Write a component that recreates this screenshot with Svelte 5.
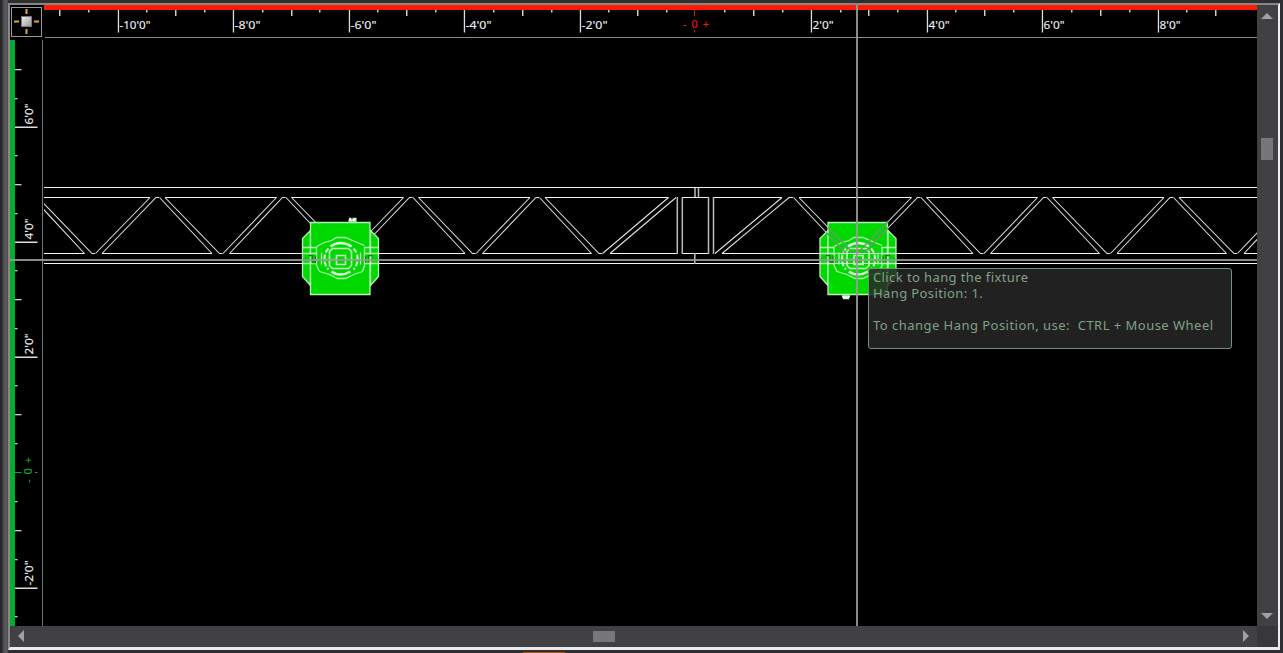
<script>
  const xTicks = Array.from({ length: 41 }, (_, i) => ({ i, x: Math.floor(60.8 + i * 28.9) }))
    .map(({ i, x }) => ({ x, kind: (i + 2) % 4 === 0 ? 'major' : i % 2 === 0 ? 'mid' : 'small' }))
    .filter((t) => t.kind !== 'major');
  const xMajor = [
    { x: 118, label: `-10'0"`, w: 31 },
    { x: 233, label: `-8'0"`, w: 26 },
    { x: 349, label: `-6'0"`, w: 26 },
    { x: 464, label: `-4'0"`, w: 26 },
    { x: 580, label: `-2'0"`, w: 26 },
    { x: 811, label: `2'0"`, w: 21 },
    { x: 927, label: `4'0"`, w: 21 },
    { x: 1042, label: `6'0"`, w: 21 },
    { x: 1158, label: `8'0"`, w: 21 }
  ];
  const yMid = [69, 184, 299, 414, 530];
  const ySmall = [98, 155, 213, 270, 328, 385, 443, 501, 559, 616];
  const yMajor = [
    { y: 127, label: `6'0"`, w: 21 },
    { y: 242, label: `4'0"`, w: 21 },
    { y: 357, label: `2'0"`, w: 21 },
    { y: 588, label: `-2'0"`, w: 25 }
  ];

  // Lattice of one truss section: alternating top and bottom nodes.
  const T = 197.5;
  const B = 253.5;
  const down = (t, b) => `M${t + 2} ${T}L${b - 9} ${B}M${t + 7.5} ${T}L${b - 1.5} ${B}H${b + 1.5}`;
  const up = (b, t) => `M${b + 2} ${B}L${t - 7.5} ${T}M${b + 8.5} ${B}L${t - 1.5} ${T}H${t + 1.5}`;
  const topsL = [30.5, 157.5, 284, 411, 537.5];
  const botsL = [93.5, 221, 347.5, 474, 600.5];
  const topsR = [791.5, 919, 1045, 1171.5];
  const botsR = [855, 982, 1108.5, 1235.5];
  let lattice = '';
  let chords = '';
  topsL.forEach((t, i) => {
    lattice += down(t, botsL[i]);
    if (i < 4) {
      lattice += up(botsL[i], topsL[i + 1]);
      chords += `M${t + 7.5} ${T}H${topsL[i + 1] - 7.5}M${botsL[i] + 8.5} ${B}H${botsL[i + 1] - 9}`;
    }
  });
  topsR.forEach((t, i) => {
    lattice += down(t, botsR[i]);
    const next = topsR[i + 1] ?? 1298;
    lattice += up(botsR[i], next);
    chords += `M${t + 7.5} ${T}H${next - 7.5}`;
    chords += `M${botsR[i] + 8.5} ${B}H${(botsR[i + 1] ?? 1362) - 9}`;
  });
  lattice += `M602.5 ${B}L668.5 ${T}M610 ${B}L676 ${T}M715 ${B}L782 ${T}M722 ${B}L789 ${T}H793`;
  chords += `M44 ${B}H84.5M545 ${T}H668.5M610 ${B}H677M682 ${T}H708M682 ${B}H708M713 ${T}H782M722 ${B}H846`;
</script>

{#snippet fixture(flip)}
  <g class="fixture">
    <path class="body" d="M-30-28L-38-20V18L-30 27ZM30-28L38-20V18L30 27Z" />
    <path class="body" d="M-30-36H29.500V36H-30Z" />
    <path d="M-38-11H-24V7M-38-5H-24M-38 5H-24M38-11H24V7M38-5H24M38 5H24" />
    <path d="M-24-12L-16-16L-9-18L-4-21H5L12-18L24-13M-24 7L-21 13L-11 16L-3 20H5L13 16L22 13L24 7" />
    <path class="bold" d="M-10-12Q-5-15.500 0-15.500Q6-15.500 11-12M-9 13Q-5 16 0 16Q5 16 10 13" />
    <path class="broken" d="M-12-10Q-16-6-16 0Q-16 7-12 11M13-10Q17-6 17 0Q17 7 13 11" />
    <path d="M-19-6V6M20-6V6" />
    <path class="square" d="M-8-10H8L11-7V7L8 10H-8L-11 7V-7ZM-4-3H5V6H-4Z" />
    <path class="soft" d="M-14 1H-5M6 1H14" />
    <path class="dim" d="M-37 1H-31M-32-3H-28V4M-25-3V4H-28M25-3V4M32-3H28V4M31 1H37" />
    {#if flip}
      <path class="bold" d="M-16 38H-8M-15 39.500H-9" />
    {:else}
      <path class="bold" d="M8-38H16M8.500-39.500H11M12-39.500H16" />
    {/if}
  </g>
{/snippet}

<div class="window">
  <div class="frame">
    <div class="view">
      <div class="origin">
        <svg width="29" height="28" viewBox="0 0 29 28">
          <defs>
            <linearGradient id="knob" x1="0" y1="0" x2="1" y2="1">
              <stop offset="0" stop-color="#eee" /><stop offset="1" stop-color="#999" />
            </linearGradient>
          </defs>
          <path d="M14.500 1V6M14.500 21V26M2 13.500H7M22 13.500H27" stroke="#e8a432" stroke-width="2" />
          <rect x="9.500" y="8.500" width="10" height="10" fill="url(#knob)" stroke="#777" />
        </svg>
      </div>

      <svg class="ruler top" viewBox="43 5 1214 35">
        <rect x="44" y="5" width="1213" height="5" fill="#ff1a00" />
        {#each xTicks as t}
          <rect x={t.x - 1} y="10" width="1.500" height={t.kind === 'mid' ? 6 : 2.500} fill="#ccc" />
        {/each}
        {#each xMajor as m}
          <rect x={m.x - 0.200} y="10" width="1.300" height="22.500" fill="#ddd" />
          <text x={m.x + 1.500} y="29" textLength={m.w} lengthAdjust="spacingAndGlyphs">{m.label}</text>
        {/each}
        <g class="zero-x">
          <path d="M694.500 10V16M694.500 30V32.500" stroke="#ee1c10" />
          <text x="683" y="28" textLength="26" lengthAdjust="spacing">- 0 +</text>
        </g>
        <path d="M45 37.500H1257" stroke="#888" />
      </svg>

      <svg class="ruler left" viewBox="10 40 33 586">
        <rect x="10" y="40" width="5" height="586" fill="#00ad2e" />
        {#each yMid as y}<rect x="15" {y} width="6.500" height="1.300" fill="#ccc" />{/each}
        {#each ySmall as y}<rect x="15" {y} width="2.500" height="1.300" fill="#ccc" />{/each}
        {#each yMajor as m}
          <rect x="15" y={m.y - 0.500} width="22.500" height="1.500" fill="#ddd" />
          <text transform="translate(33 {m.y - 2.5}) rotate(-90)" textLength={m.w} lengthAdjust="spacingAndGlyphs">{m.label}</text>
        {/each}
        <g class="zero-y">
          <path d="M15 472.500H21.500M35 472.500H37.500" stroke="#13a93a" />
          <text transform="translate(32 483) rotate(-90)" textLength="26" lengthAdjust="spacing">- 0 +</text>
        </g>
        <path d="M42.500 40V626" stroke="#777" />
      </svg>

      <svg class="canvas" viewBox="43 40 1214 586">
        <defs>
          <clipPath id="stage"><rect x="44" y="40" width="1213" height="586" /></clipPath>
          <clipPath id="lamp"><path d="M828 222H888V295H828ZM820 239L828 231V285L820 277ZM896 239L888 231V285L896 277Z" /></clipPath>
        </defs>
        <g clip-path="url(#stage)">
          <g class="truss">
            <path d="M44 187.500H1257M44 263.500H1257" />
            <path d={chords} />
            <path d={lattice} class="web" />
            <path class="post" d="M677.300 197V254M682.300 197V254M708.500 197V254M713.500 197V254M695 188V197M698.500 188V197M694.800 253V264" />
          </g>
          <g transform="translate(340.500 258.500)">{@render fixture(false)}</g>
          <g transform="translate(858 258.500)">{@render fixture(true)}</g>
          <path d={lattice} class="ghost" clip-path="url(#lamp)" />
          <path d="M820 253.500H896M820 263.500H896" stroke="#d5e6d5" />
        </g>
      </svg>

      <div class="cross-h"></div>
      <div class="cross-v"></div>

      <div class="tip">
        <p>Click to hang the fixture</p>
        <p>Hang Position: 1.</p>
        <p class="hint">To change Hang Position, use:&nbsp; CTRL + Mouse Wheel</p>
      </div>
    </div>

    <div class="bar vertical">
      <svg width="12" height="6" viewBox="0 0 12 6"><path d="M0 6L6 0L12 6Z" /></svg>
      <i></i>
      <svg width="12" height="6" viewBox="0 0 12 6"><path d="M0 0H12L6 6Z" /></svg>
    </div>
    <div class="bar horizontal">
      <svg width="6" height="12" viewBox="0 0 6 12"><path d="M6 0V12L0 6Z" /></svg>
      <i></i>
      <svg width="6" height="12" viewBox="0 0 6 12"><path d="M0 0V12L6 6Z" /></svg>
    </div>
    <div class="corner"></div>
  </div>
  <div class="accent"></div>
</div>

<style>
  :global(body) {
    margin: 0;
    background: #2d2d30;
  }
  .window {
    box-sizing: border-box;
    width: 1283px;
    height: 653px;
    padding: 3px 3px 0 8px;
    overflow: hidden;
    background: linear-gradient(90deg, #29292c 0, #29292c 2px, #48484c 3px, #5b5b60 6px, #48484c 8px, #2f2f32 8px);
  }
  .frame {
    display: grid;
    grid-template-columns: 1247px 21px;
    grid-template-rows: 621px 21px;
    width: 1268px;
    border: 2px solid #888;
    border-right-color: #eee;
    border-bottom: 3px solid #eaeaea;
    background: #000;
  }
  .view {
    position: relative;
    display: grid;
    grid-template-columns: 33px 1214px;
    grid-template-rows: 35px 586px;
    overflow: hidden;
    background: #000;
  }
  .origin {
    width: 29px;
    height: 28px;
    margin: 2px 0 0 1px;
    border: 1px solid #999;
  }
  svg {
    display: block;
  }
  .ruler, .canvas {
    width: 100%;
    height: 100%;
  }
  .ruler text {
    font: 11px "Noto Sans", sans-serif;
    fill: #f2f2f2;
    stroke: #f2f2f2;
    stroke-width: 0.1;
  }
  .ruler .zero-x text {
    fill: #ee1c10;
    stroke: #ee1c10;
  }
  .ruler .zero-y text {
    fill: #13a93a;
    stroke: #13a93a;
  }
  .truss path {
    fill: none;
    stroke: #f4f4f4;
    stroke-width: 1.15;
  }
  .truss .web {
    stroke: #e4e4e4;
    stroke-width: 1.05;
  }
  .truss .post {
    stroke: #bbb;
    stroke-width: 1.5;
  }
  .fixture path {
    fill: none;
    stroke: #b4f5b4;
    stroke-width: 1.3;
  }
  .fixture .body {
    fill: #00d900;
  }
  .fixture .bold {
    stroke: #d8f8d8;
    stroke-width: 2.4;
  }
  .fixture .broken {
    stroke: #c4f5c4;
    stroke-width: 2.2;
    stroke-dasharray: 5 2;
  }
  .fixture .square {
    stroke: #c4f5c4;
    stroke-width: 1.6;
  }
  .fixture .soft {
    stroke: #6fe36f;
  }
  .fixture .dim {
    stroke: #167d16;
  }
  .ghost {
    fill: none;
    stroke: #679b65;
    stroke-width: 1.6;
  }
  .cross-h, .cross-v {
    position: absolute;
    background: #999;
    opacity: 0.9;
  }
  .cross-h {
    left: 0;
    right: 0;
    top: 254px;
    height: 2px;
  }
  .cross-v {
    top: 0;
    bottom: 0;
    left: 846px;
    width: 2px;
  }
  .tip {
    position: absolute;
    left: 858px;
    top: 263px;
    box-sizing: border-box;
    width: 364px;
    height: 81px;
    padding: 0 0 0 4px;
    border: 1px solid #73937a;
    border-radius: 3px;
    background: rgba(38, 38, 38, 0.86);
    color: #82a087;
    font: 13px/16px "Noto Sans", sans-serif;
    letter-spacing: 0.4px;
    white-space: nowrap;
  }
  .tip p {
    margin: 0;
  }
  .tip .hint {
    margin-top: 16px;
    letter-spacing: 0.47px;
  }
  .bar, .corner {
    background: #414144;
  }
  .bar {
    display: flex;
    align-items: center;
    box-sizing: border-box;
  }
  .bar path {
    fill: #a0a0a3;
  }
  .bar i {
    background: #77777a;
  }
  .vertical {
    flex-direction: column;
    padding: 8px 1px 7px 0;
  }
  .vertical i {
    width: 12px;
    height: 22px;
    margin: 119px 0 auto;
  }
  .horizontal {
    padding: 0 8px 1px;
  }
  .horizontal i {
    width: 22px;
    height: 11px;
    margin: 0 auto 0 569px;
  }
  .corner {
    background: #38383b;
  }
  .accent {
    width: 42px;
    height: 2px;
    margin: 2px 0 0 515px;
    background: #a9570f;
  }
</style>
